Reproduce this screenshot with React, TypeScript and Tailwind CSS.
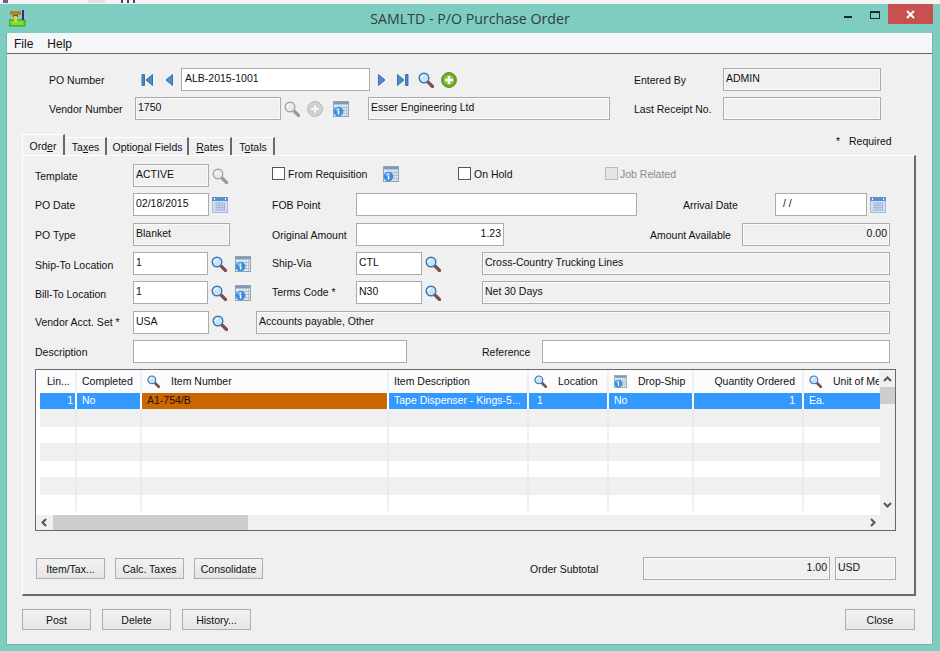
import type { ReactNode } from "react";

const Search = ({ gray = false, size = 16 }: { gray?: boolean; size?: number }) => (
  <svg width={size} height={size} viewBox="0 0 16 16" className="shrink-0">
    <line x1="9.5" y1="9.5" x2="14.5" y2="14.5" stroke={gray ? "#9a9a9a" : "#7d4f4a"} strokeWidth="3.2" strokeLinecap="round" />
    <circle cx="6" cy="6" r="4.8" fill={gray ? "#ececec" : "#c6e4f9"} stroke={gray ? "#a8a8a8" : "#3a78b0"} strokeWidth="1.4" />
    <path d="M3.400 6a2.600 2.600 0 0 1 2.600-2.600" fill="none" stroke="#fff" strokeWidth="1.2" />
  </svg>
);

const Plus = ({ gray = false }: { gray?: boolean }) => (
  <svg width="16" height="16" viewBox="0 0 16 16" className="shrink-0">
    <circle cx="8" cy="8" r="7.4" fill={gray ? "#d4d4d4" : "#6eab2c"} stroke={gray ? "#b5b5b5" : "#4d8a1b"} />
    <circle cx="8" cy="8" r="5" fill={gray ? "#c9c9c9" : "#8cc63f"} />
    <path d="M8 4v8M4 8h8" stroke={gray ? "#f4f4f4" : "#fff"} strokeWidth="2.4" />
  </svg>
);

const Info = ({ size = 16 }: { size?: number }) => (
  <svg width={size} height={size} viewBox="0 0 16 16" className="shrink-0">
    <rect x="0.5" y="0.5" width="15" height="15" fill="#eaeff4" stroke="#8fa2b8" />
    <rect x="1" y="1" width="14" height="2.500" fill="#7f99b8" />
    <path d="M5 4v11M8 4v11M11 4v11M13.5 4v11M1 6.500h14M1 9.500h14M1 12.500h14" stroke="#a9b8c9" strokeWidth="0.8" />
    <circle cx="5.500" cy="10.500" r="4.800" fill="#3a8ee0" />
    <circle cx="4.500" cy="8.500" r="2" fill="#7cbcf2" />
    <rect x="4.800" y="9.800" width="1.500" height="3.700" fill="#fff" />
    <rect x="4.800" y="7.500" width="1.500" height="1.400" fill="#fff" />
  </svg>
);

const Calendar = () => (
  <svg width="16" height="16" viewBox="0 0 16 16" className="shrink-0">
    <rect x="0.5" y="0.5" width="15" height="15" fill="#d3dff2" stroke="#a6bad9" />
    <rect x="0" y="0" width="16" height="4" fill="#5a90d2" />
    <path d="M2.500 3v-2M13.500 3v-2" stroke="#fff" />
    <path d="M3 6h10M3 8.300h10M3 10.600h10M3 13h10M5 5.500v8M7.500 5.500v8M10 5.500v8M12.500 5.500v8" stroke="#9cafd3" strokeWidth="0.8" />
  </svg>
);

const Nav = ({ kind }: { kind: "first" | "prev" | "next" | "last" }) => {
  const paths = {
    first: ["M11.500 1.500v11L5 7z", "M1 1.500h2.500v11H1z"],
    prev: ["M7.500 1.500v11L1 7z"],
    next: ["M1.500 1.500v11L8 7z"],
    last: ["M.5 1.500v11L7 7z", "M8.500 1.500H11v11H8.500z"],
  }[kind];
  const w = kind === "first" || kind === "last" ? 12 : 10;
  return (
    <svg width={w} height="14" viewBox={`0 0 ${w} 14`} className="shrink-0">
      {paths.map((d) => (
        <path key={d} d={d} fill="#4a8ad2" stroke="#2a5a9a" strokeWidth="0.8" />
      ))}
    </svg>
  );
};

const AppIcon = () => (
  <svg width="17" height="17" viewBox="0 0 17 17" className="shrink-0">
    <rect x="0" y="10" width="16" height="6" fill="#5fd01f" stroke="#2f8f10" strokeWidth="0.8" />
    <path d="M2 12h12M2 14h12" stroke="#9ef04a" />
    <rect x="1" y="1" width="11" height="4" fill="#a8862c" />
    <rect x="4" y="5" width="5" height="2" fill="#6e5a1c" />
    <rect x="5" y="6" width="3" height="6" fill="#f2d21b" />
    <rect x="13" y="0" width="2" height="10" fill="#4a1f7a" />
  </svg>
);

const Text = ({ className = "", children }: { className?: string; children: ReactNode }) => (
  <span className={`shrink-0 whitespace-nowrap text-[#111] ${className}`}>{children}</span>
);

const Field = ({ className = "", value = "", readOnly = false, right = false }: { className?: string; value?: string; readOnly?: boolean; right?: boolean }) => (
  <div
    className={`h-[23px] shrink-0 overflow-hidden border border-[#ababab] px-[2px] pt-[2px] leading-[14px] text-[#111] ${
      readOnly ? "bg-[#f0f0f0] shadow-[inset_0_0_0_1px_#fafafa]" : "bg-white"
    } ${right ? "text-right" : ""} ${className}`}
  >
    {value}
  </div>
);

const Check = ({ disabled = false }: { disabled?: boolean }) => (
  <div className={`mb-[4px] h-[13px] w-[13px] shrink-0 border ${disabled ? "border-[#bcbcbc] bg-[#e6e6e6]" : "border-[#555] bg-white"}`} />
);

const Btn = ({ className = "", children }: { className?: string; children: ReactNode }) => (
  <button className={`h-[21px] w-[69px] shrink-0 border border-[#adadad] bg-linear-to-b from-[#f2f2f2] to-[#e5e5e5] text-center leading-[18px] text-[#111] ${className}`}>
    {children}
  </button>
);

const Row = ({ className = "", children }: { className?: string; children: ReactNode }) => (
  <div className={`flex h-[23px] items-center pl-[12px] ${className}`}>{children}</div>
);

const Tab = ({ className = "", children }: { className?: string; children: ReactNode }) => (
  <div className={`h-[18px] shrink-0 border-r-2 border-t border-r-[#696969] border-t-white pl-[1px] text-center leading-[18px] text-[#111] ${className}`}>{children}</div>
);

const colW = ["w-[41px]", "w-[65px]", "w-[247px]", "w-[140px]", "w-[80px]", "w-[85px]", "w-[110px]", "w-[77px]"];

const GridRows = [
  { h: "h-[18px]", bg: "bg-[#f0f0f0]", line: "border-[#eaeaea]" },
  { h: "h-[16px]", bg: "bg-white", line: "border-[#f0f0f0]" },
  { h: "h-[18px]", bg: "bg-[#f0f0f0]", line: "border-[#eaeaea]" },
  { h: "h-[16px]", bg: "bg-white", line: "border-[#f0f0f0]" },
  { h: "h-[18px]", bg: "bg-[#f0f0f0]", line: "border-[#eaeaea]" },
  { h: "h-[16px]", bg: "bg-white", line: "border-[#f0f0f0]" },
];

const Chevron = ({ d }: { d: string }) => (
  <svg width="9" height="9" viewBox="0 0 9 9" className="shrink-0">
    <path d={d} fill="none" stroke="#555" strokeWidth="2" />
  </svg>
);

const HeadCell = ({ className = "", children }: { className?: string; children?: ReactNode }) => (
  <div className={`flex h-full shrink-0 items-center overflow-hidden whitespace-nowrap border-r-2 border-[#e9f0f9] text-[#111] ${className}`}>{children}</div>
);

const App = () => {
  return (
    <div className="flex h-[651px] w-[940px] flex-col overflow-hidden bg-[#7fcdc1] font-['Liberation_Sans',sans-serif] text-[10.5px]">
      {/* strip of the window behind */}
      <div className="flex h-[4px] shrink-0 bg-[#f4f4f4]">
        <div className="ml-[3px] h-[3px] w-[5px] bg-[#6a5a9a]" />
        <div className="ml-[80px] h-[3px] w-[17px] bg-[#e2e2e2]" />
        <div className="ml-[16px] h-[3px] w-[2px] bg-[#44406a]" />
        <div className="ml-[4px] h-[3px] w-[2px] bg-[#44406a]" />
        <div className="ml-[4px] h-[3px] w-[2px] bg-[#44406a]" />
      </div>

      {/* Title bar */}
      <div className="grid h-[29px] shrink-0 grid-cols-[1fr_auto_1fr]">
        <div className="flex items-start pl-[9px] pt-[6px]">
          <AppIcon />
        </div>
        <div className="pt-[5px] font-['Open_Sans',sans-serif] text-[14.2px] leading-[20px] text-[#2f3f3d]">SAMLTD - P/O Purchase Order</div>
        <div className="flex items-start justify-end pr-[7px]">
          <div className="ml-[8px] mt-[12px] h-[2px] w-[8px] bg-[#1c2c2a]" />
          <div className="ml-[18px] mt-[7px] h-[8px] w-[10px] border border-t-2 border-[#1c2c2a]" />
          <div className="ml-[8px] flex h-[20px] w-[45px] items-center justify-center bg-[#c75050]">
            <svg width="9" height="9" viewBox="0 0 9 9">
              <path d="M1 1l7 7M8 1l-7 7" stroke="#fff" strokeWidth="2" />
            </svg>
          </div>
        </div>
      </div>

      {/* Client area */}
      <div className="ml-[6px] mr-[7px] flex h-[612px] shrink-0 flex-col border border-[#6fb8ad] border-t-0 bg-[#f0f0f0]">
        {/* Menu */}
        <div className="flex h-[21px] shrink-0 items-center gap-[14px] border-b border-[#666] bg-[#f5f6f8] pl-[7px] pt-[1px] text-[12px] text-[#111]">
          <span>File</span>
          <span>Help</span>
        </div>

        {/* Header fields */}
        <div className="flex h-[23px] items-center pl-[42px] mt-[14px]">
          <Text className="w-[92px] pt-[2px]">PO Number</Text>
          <Nav kind="first" />
          <div className="ml-[12px]">
            <Nav kind="prev" />
          </div>
          <Field className="ml-[6px] w-[189px] pl-[3px]" value="ALB-2015-1001" />
          <div className="ml-[7px]">
            <Nav kind="next" />
          </div>
          <div className="ml-[10px]">
            <Nav kind="last" />
          </div>
          <div className="ml-[9px]">
            <Search />
          </div>
          <div className="ml-[7px]">
            <Plus />
          </div>
          <Text className="ml-[177px] w-[89px] pt-[2px]">Entered By</Text>
          <Field className="w-[158px]" value="ADMIN" readOnly />
        </div>
        <div className="mt-[6px] flex h-[23px] items-center pl-[42px]">
          <Text className="w-[86px] pt-[2px]">Vendor Number</Text>
          <Field className="w-[146px]" value="1750" readOnly />
          <div className="ml-[3px]">
            <Search gray />
          </div>
          <div className="ml-[7px]">
            <Plus gray />
          </div>
          <div className="ml-[10px]">
            <Info />
          </div>
          <Field className="ml-[19px] w-[242px]" value="Esser Engineering Ltd" readOnly />
          <Text className="ml-[24px] w-[89px] pt-[2px]">Last Receipt No.</Text>
          <Field className="w-[158px]" readOnly />
        </div>

        {/* Tabs */}
        <div className="mt-[14px] flex h-[21px] shrink-0 items-end pl-[15px]">
          <div className="h-[22px] w-[43px] shrink-0 self-start border-l border-r-2 border-t border-l-white border-r-[#696969] border-t-white pt-[3px] text-center leading-[16px] text-[#111]">
            Ord<u>e</u>r
          </div>
          <Tab className="w-[42px]">
            Ta<u>x</u>es
          </Tab>
          <Tab className="w-[82px]">
            Optio<u>n</u>al Fields
          </Tab>
          <Tab className="w-[43px]">
            <u>R</u>ates
          </Tab>
          <Tab className="w-[43px]">
            T<u>o</u>tals
          </Tab>
          <Text className="mb-[5px] ml-[561px] w-[13px]">*</Text>
          <Text className="mb-[5px]">Required</Text>
        </div>

        {/* Tab panel */}
        <div className="ml-[15px] h-[441px] w-[894px] shrink-0 border border-b-2 border-r-2 border-b-[#696969] border-l-white border-r-[#696969] border-t-white pt-[8px]">
          <Row>
            <Text className="w-[98px] pt-[2px]">Template</Text>
            <Field className="w-[76px]" value="ACTIVE" readOnly />
            <div className="ml-[3px]">
              <Search gray />
            </div>
            <div className="ml-[44px]">
              <Check />
            </div>
            <Text className="mb-[1px] ml-[3px] w-[95px]">From Requisition</Text>
            <div className="mb-[3px]">
              <Info />
            </div>
            <div className="ml-[59px]">
              <Check />
            </div>
            <Text className="mb-[1px] ml-[3px] w-[131px]">On Hold</Text>
            <Check disabled />
            <Text className="mb-[1px] ml-[2px] !text-[#8a8a8a]">Job Related</Text>
          </Row>
          <Row className="mt-[6px]">
            <Text className="w-[98px] pt-[2px]">PO Date</Text>
            <Field className="w-[76px]" value="02/18/2015" />
            <div className="ml-[3px]">
              <Calendar />
            </div>
            <Text className="ml-[44px] w-[84px] pt-[2px]">FOB Point</Text>
            <Field className="w-[281px]" />
            <Text className="ml-[46px] w-[92px] pt-[2px]">Arrival Date</Text>
            <Field className="w-[92px] pl-[7px]" value="/  /" />
            <div className="ml-[3px]">
              <Calendar />
            </div>
          </Row>
          <Row className="mt-[7px]">
            <Text className="w-[98px] pt-[2px]">PO Type</Text>
            <Field className="w-[97px]" value="Blanket" readOnly />
            <Text className="ml-[42px] w-[84px] pt-[2px]">Original Amount</Text>
            <Field className="w-[148px]" value="1.23" right />
            <Text className="ml-[146px] w-[92px] pt-[2px]">Amount Available</Text>
            <Field className="w-[148px]" value="0.00" readOnly right />
          </Row>
          <Row className="mt-[6px]">
            <Text className="w-[98px] pt-[4px]">Ship-To Location</Text>
            <Field className="w-[75px]" value="1" />
            <div className="ml-[3px]">
              <Search />
            </div>
            <div className="ml-[8px]">
              <Info />
            </div>
            <Text className="ml-[21px] w-[84px]">Ship-Via</Text>
            <Field className="w-[66px]" value="CTL" />
            <div className="ml-[3px]">
              <Search />
            </div>
            <Field className="ml-[41px] w-[408px]" value="Cross-Country Trucking Lines" readOnly />
          </Row>
          <Row className="mt-[6px]">
            <Text className="w-[98px] pt-[4px]">Bill-To Location</Text>
            <Field className="w-[75px]" value="1" />
            <div className="ml-[3px]">
              <Search />
            </div>
            <div className="ml-[8px]">
              <Info />
            </div>
            <Text className="ml-[21px] w-[84px]">Terms Code *</Text>
            <Field className="w-[66px]" value="N30" />
            <div className="ml-[3px]">
              <Search />
            </div>
            <Field className="ml-[41px] w-[408px]" value="Net 30 Days" readOnly />
          </Row>
          <Row className="mt-[7px]">
            <Text className="w-[98px]">Vendor Acct. Set *</Text>
            <Field className="w-[76px]" value="USA" />
            <div className="ml-[3px]">
              <Search />
            </div>
            <Field className="ml-[28px] w-[634px]" value="Accounts payable, Other" readOnly />
          </Row>
          <Row className="mt-[6px]">
            <Text className="w-[98px] pt-[2px]">Description</Text>
            <Field className="w-[274px]" />
            <Text className="ml-[75px] w-[60px] pt-[2px]">Reference</Text>
            <Field className="w-[348px]" />
          </Row>

          {/* Lines grid */}
          <div className="ml-[12px] mt-[6px] flex h-[162px] w-[861px] flex-col border border-[#696969] bg-[#f0f0f0]">
            <div className="flex min-h-0 flex-1">
              <div className="w-[844px] shrink-0 overflow-hidden bg-white">
                <div className="flex h-[23px] bg-[#fcfcfd]">
                  <HeadCell className={`${colW[0]} pl-[11px]`}>Lin...</HeadCell>
                  <HeadCell className={`${colW[1]} pl-[5px]`}>Completed</HeadCell>
                  <HeadCell className={`${colW[2]} pl-[5px]`}>
                    <Search size={13} />
                    <span className="ml-[11px]">Item Number</span>
                  </HeadCell>
                  <HeadCell className={`${colW[3]} pl-[5px]`}>Item Description</HeadCell>
                  <HeadCell className={`${colW[4]} pl-[5px]`}>
                    <Search size={13} />
                    <span className="ml-[11px]">Location</span>
                  </HeadCell>
                  <HeadCell className={`${colW[5]} pl-[5px]`}>
                    <Info size={13} />
                    <span className="ml-[11px]">Drop-Ship</span>
                  </HeadCell>
                  <HeadCell className={`${colW[6]} justify-end pr-[7px]`}>Quantity Ordered</HeadCell>
                  <HeadCell className={`${colW[7]} border-r-0 pl-[5px]`}>
                    <Search size={13} />
                    <span className="ml-[11px]">Unit of Measure</span>
                  </HeadCell>
                </div>
                <div className="flex h-[16px] border-l-[4px] border-white bg-[#3399ff] leading-[15px] text-white">
                  <div className="w-[37px] shrink-0 border-r-2 border-white pr-[2px] text-right">1</div>
                  <div className={`${colW[1]} shrink-0 border-r-2 border-white pl-[5px]`}>No</div>
                  <div className={`${colW[2]} shrink-0 border-r-2 border-white bg-[#cc6600] pl-[5px] text-[#1a1206]`}>A1-754/B</div>
                  <div className={`${colW[3]} shrink-0 border-r-2 border-white pl-[5px]`}>Tape Dispenser - Kings-5...</div>
                  <div className={`${colW[4]} shrink-0 border-r-2 border-white pl-[8px]`}>1</div>
                  <div className={`${colW[5]} shrink-0 border-r-2 border-white pl-[5px]`}>No</div>
                  <div className={`${colW[6]} shrink-0 border-r-2 border-white pr-[7px] text-right`}>1</div>
                  <div className={`${colW[7]} shrink-0 pl-[5px]`}>Ea.</div>
                </div>
                {GridRows.map((r, i) => (
                  <div key={i} className={`flex border-l-[4px] border-white ${r.h}`}>
                    <div className={`w-[37px] shrink-0 border-r-2 ${r.bg} ${r.line}`} />
                    {colW.slice(1).map((w, j) => (
                      <div key={j} className={`${w} shrink-0 ${j < 6 ? "border-r-2" : ""} ${r.bg} ${r.line}`} />
                    ))}
                  </div>
                ))}
              </div>
              {/* Vertical scrollbar */}
              <div className="flex w-[15px] shrink-0 flex-col items-center bg-[#f0f0f0]">
                <div className="mt-[5px]">
                  <Chevron d="M1 6l3.500-3.500L8 6" />
                </div>
                <div className="mt-[3px] h-[17px] w-full bg-[#cdcdcd]" />
                <div className="mt-[96px]">
                  <Chevron d="M1 3l3.500 3.500L8 3" />
                </div>
              </div>
            </div>
            {/* Horizontal scrollbar */}
            <div className="flex h-[15px] shrink-0 items-center bg-[#f0f0f0]">
              <div className="ml-[4px]">
                <Chevron d="M6 1L2.500 4.500L6 8" />
              </div>
              <div className="ml-[4px] h-full w-[195px] bg-[#cdcdcd]" />
              <div className="ml-[620px]">
                <Chevron d="M3 1l3.500 3.500L3 8" />
              </div>
            </div>
          </div>

          {/* Panel buttons */}
          <div className="mt-[26px] flex h-[23px] items-center pl-[13px]">
            <Btn>Item/Tax...</Btn>
            <Btn className="ml-[10px]">Calc. Taxes</Btn>
            <Btn className="ml-[10px]">Consolidate</Btn>
            <Text className="ml-[267px] w-[113px] pt-[2px]">Order Subtotal</Text>
            <Field className="w-[187px]" value="1.00" readOnly right />
            <Field className="ml-[5px] w-[61px]" value="USD" readOnly />
          </div>
        </div>

        {/* Bottom buttons */}
        <div className="mt-[13px] flex pl-[15px]">
          <Btn>Post</Btn>
          <Btn className="ml-[11px]">Delete</Btn>
          <Btn className="ml-[11px]">History...</Btn>
          <Btn className="ml-[594px] w-[70px]">Close</Btn>
        </div>
      </div>
    </div>
  );
};

export default App;
